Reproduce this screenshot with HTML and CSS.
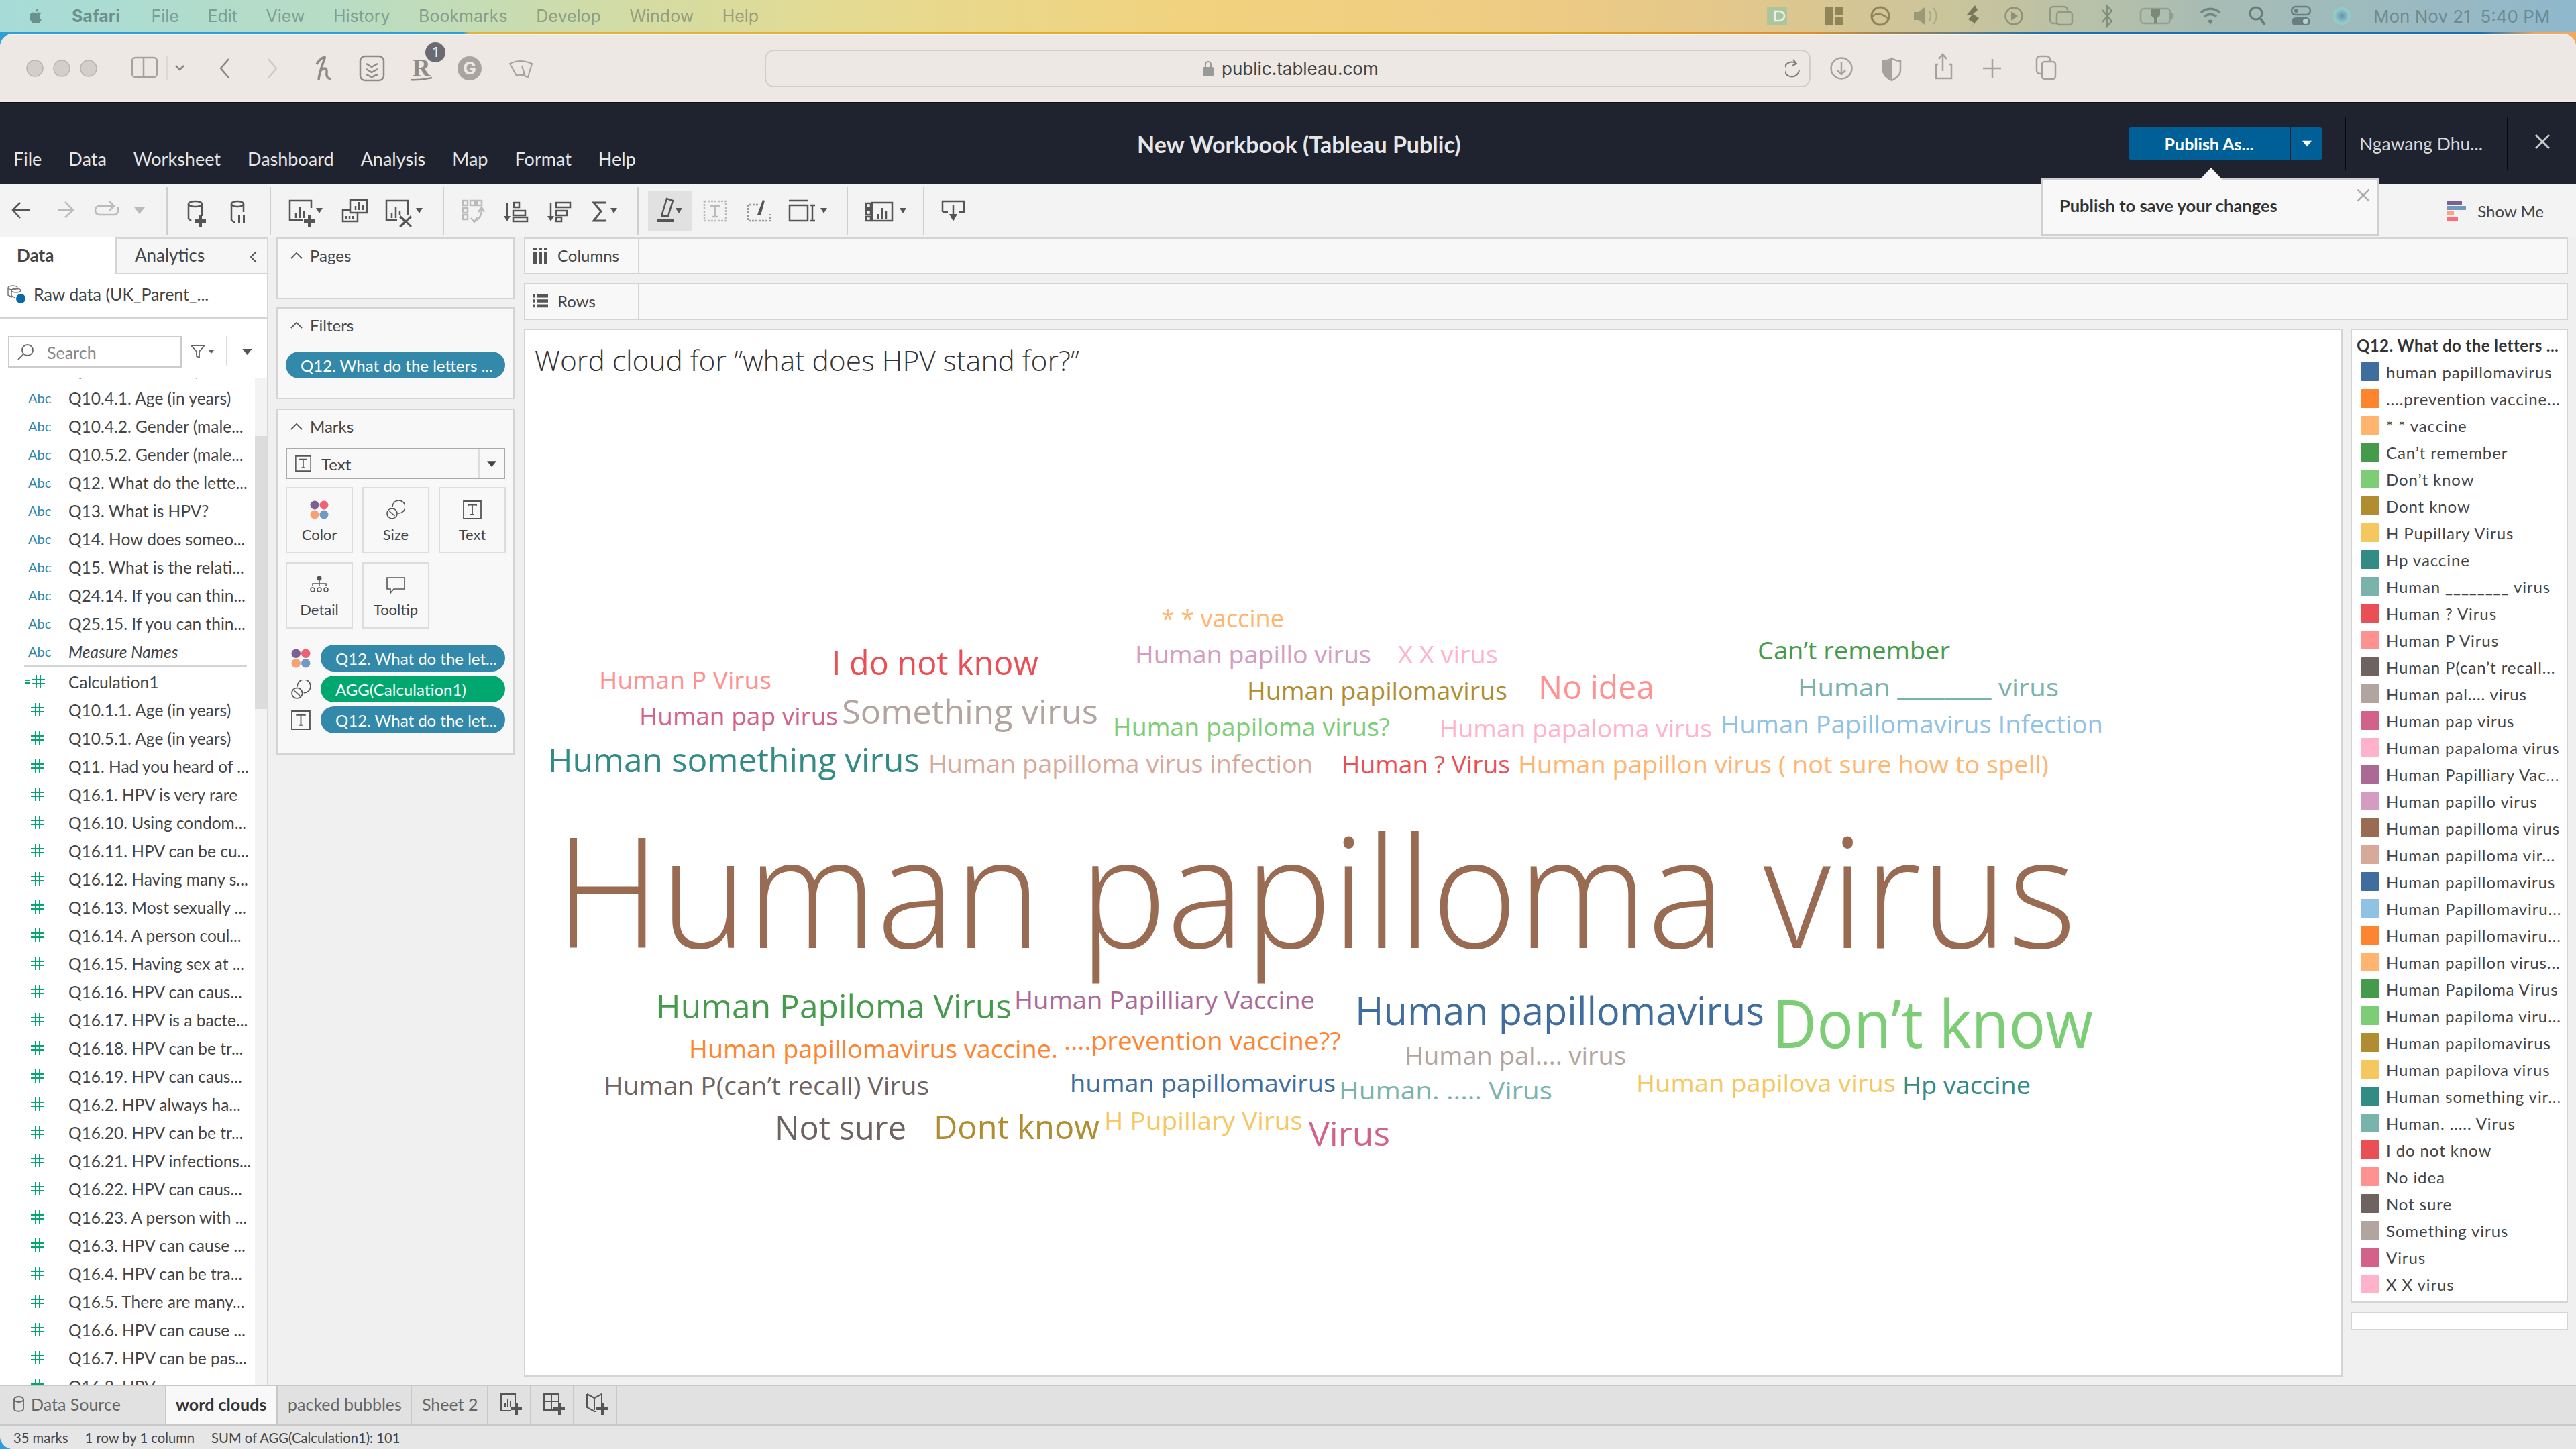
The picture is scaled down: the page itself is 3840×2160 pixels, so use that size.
FILE: index.html
```html
<!DOCTYPE html>
<html lang="en">
<head>
  <meta charset="UTF-8" />
  <title>New Workbook (Tableau Public)</title>
  <link rel="stylesheet" href="styles.css">
</head>
<body>
  <svg class="defs" aria-hidden="true">
    <symbol id="i-hash" viewBox="0 0 20 20"><path d="M7 0v20M13 0v20M0 7h20M0 13h20" fill="none" stroke="currentColor" stroke-width="2"/></symbol>
    <symbol id="i-calc" viewBox="0 0 30 20"><path d="M17 0v20M23 0v20M10 7h20M10 13h20M0 8h7M0 12h7" fill="none" stroke="currentColor" stroke-width="2"/></symbol>
    <symbol id="i-text" viewBox="0 0 28 28"><path d="M1 1h26v26H1zM8 8V6.500h12V8M14 6.500V21M11 21h6" fill="none" stroke="#555" stroke-width="1.800"/></symbol>
    <symbol id="i-color" viewBox="0 0 28 28"><circle cx="7" cy="7" r="6.500" fill="#7b6292"/><circle cx="21" cy="7" r="6.500" fill="#f26173"/><circle cx="7" cy="21" r="6.500" fill="#f7a072"/><circle cx="21" cy="21" r="6.500" fill="#6f9ac2"/></symbol>
    <symbol id="i-size" viewBox="0 0 28 28"><path d="M9 10a9.500 9.500 0 1 1 9 9" fill="none" stroke="#555" stroke-width="1.600"/><circle cx="8.500" cy="19.500" r="7.500" fill="none" stroke="#555" stroke-width="1.600"/><path d="M4.500 16l8 7" stroke="#555" stroke-width="1.600"/></symbol>
    <symbol id="i-detail" viewBox="0 0 28 28"><circle cx="14" cy="4" r="3.500" fill="#555"/><path d="M14 7v8M4 15V12h20v3" fill="none" stroke="#555" stroke-width="1.500"/><circle cx="4" cy="21" r="3" fill="none" stroke="#555" stroke-width="1.500"/><circle cx="14" cy="21" r="3" fill="none" stroke="#555" stroke-width="1.500"/><circle cx="24" cy="21" r="3" fill="none" stroke="#555" stroke-width="1.500"/></symbol>
    <symbol id="i-tooltip" viewBox="0 0 28 28"><path d="M1 3h26v17H11l-5 6v-6H1z" fill="none" stroke="#555" stroke-width="1.600"/></symbol>
    <symbol id="i-caret" viewBox="0 0 16 10"><path d="M0 0h16L8 10z" fill="currentColor"/></symbol>
  </svg>

  <div class="page">
    <!-- mac menu bar -->
    <div class="menubar">
      <svg class="apple" viewBox="0 0 24 24"><path d="M18.710 19.500c-.83 1.240-1.710 2.450-3.050 2.470-1.340.03-1.770-.79-3.290-.79-1.530 0-2 .77-3.270.82-1.310.05-2.300-1.320-3.140-2.530C4.250 17 2.940 12.450 4.700 9.390c.87-1.520 2.430-2.480 4.120-2.510 1.280-.02 2.500.87 3.290.87.78 0 2.260-1.070 3.800-.91.65.03 2.470.26 3.640 1.980-.09.06-2.170 1.280-2.150 3.810.03 3.020 2.650 4.030 2.680 4.040-.03.07-.42 1.440-1.380 2.830M13 3.500c.73-.83 1.940-1.460 2.940-1.500.13 1.170-.34 2.350-1.040 3.190-.69.85-1.830 1.510-2.950 1.420-.15-1.150.41-2.350 1.050-3.110z"/></svg>
      <b>Safari</b><span>File</span><span>Edit</span><span>View</span><span>History</span><span>Bookmarks</span><span>Develop</span><span>Window</span><span>Help</span>
      <svg class="extras" viewBox="2620 0 900 48">
        <rect x="2634" y="11" width="30" height="26" fill="#a9c79a"/><path d="M2646 17h7a6 6 0 0 1 0 14h-7z" fill="none" stroke="#eee" stroke-width="2.500"/>
        <path d="M2720 10h12v28h-12zM2736 10h12v12h-12zM2736 26h12v12h-12z" fill="#8f8558"/>
        <circle cx="2803" cy="24" r="13" fill="none" stroke="#8f8558" stroke-width="3"/><path d="M2790 26c8-10 16-4 26 2" fill="none" stroke="#8f8558" stroke-width="2.500"/>
        <path d="M2853 18h7l9-7v26l-9-7h-7z" fill="#9a9a78"/><path d="M2875 16a12 12 0 0 1 0 16M2882 12a18 18 0 0 1 0 24" fill="none" stroke="#a8a888" stroke-width="2"/>
        <path d="M2944 8l-12 14h8l-6 7 10 6-6 6 12-14-9-6 7-6z" fill="#77775a"/>
        <circle cx="3002" cy="24" r="12.500" fill="none" stroke="#8f9078" stroke-width="2.500"/><path d="M2998 17l10 7-10 7z" fill="#8f9078"/>
        <path d="M3066 35h-5a5 5 0 0 1-5-5V15a5 5 0 0 1 5-5h16a5 5 0 0 1 5 5v4" fill="none" stroke="#8f9a84" stroke-width="2.500"/><rect x="3066" y="18" width="23" height="19" rx="4" fill="none" stroke="#8f9a84" stroke-width="2.500"/>
        <path d="M3134 15l14 17-7 7V9l7 7-14 17" fill="none" stroke="#7f8d7c" stroke-width="2.200"/>
        <rect x="3191" y="13" width="44" height="22" rx="5" fill="none" stroke="#90a08e" stroke-width="2.500"/><path d="M3206 13h14v10l-5 4v8h-4v-8l-5-4z" fill="#7a8a78"/><path d="M3238 20v8" stroke="#90a08e" stroke-width="2"/>
        <path d="M3281 19a20 20 0 0 1 28 0M3286 25a13 13 0 0 1 18 0" fill="none" stroke="#6f8682" stroke-width="3.500"/><path d="M3291 31a6 6 0 0 1 8 0l-4 6z" fill="#6f8682"/>
        <circle cx="3363" cy="20" r="9" fill="none" stroke="#667c7c" stroke-width="3"/><path d="M3369 27l7 10" stroke="#667c7c" stroke-width="3.500"/>
        <rect x="3416" y="10" width="28" height="12" rx="6" fill="none" stroke="#66807f" stroke-width="2.500"/><rect x="3416" y="26" width="28" height="12" rx="6" fill="#66807f"/><circle cx="3423" cy="16" r="3" fill="#66807f"/><circle cx="3437" cy="32" r="4" fill="#b8cfd4"/>
      </svg>
      <span class="siri"></span>
      <span class="clock">Mon Nov 21&nbsp;&nbsp;5:40 PM</span>
    </div>
    <div class="edge"></div>

    <div class="window">
      <!-- safari toolbar -->
      <div class="safari">
        <svg class="safari-left" viewBox="0 52 1140 100">
          <g fill="#d3cec9" stroke="#b9b4af" stroke-width="1.500"><circle cx="52" cy="102" r="12"/><circle cx="92" cy="102" r="12"/><circle cx="132" cy="102" r="12"/></g>
          <g fill="none" stroke="#a5a19c" stroke-width="2.500">
            <rect x="197" y="86" width="37" height="29" rx="5"/><path d="M214 86v29"/>
            <path d="M262 98l6 6 6-6" stroke="#8a8681"/>
            <path d="M341 88l-12 14 12 14" stroke="#8a8681"/><path d="M400 88l12 14-12 14" stroke="#cfcac5"/>
          </g>
          <path d="M249 84v36" stroke="#d8d3ce" stroke-width="1.500"/>
          <path d="M472 96c4-8 14-14 12-9-3 9-8 20-9 32M476 108c6-8 12-8 11 0-1 5 1 9 6 10" fill="none" stroke="#8f8b87" stroke-width="3.500"/>
          <rect x="537" y="84" width="35" height="36" rx="7" fill="none" stroke="#8f8b87" stroke-width="2.500"/><path d="M546 95l8 5 9-5M546 103l8 5 9-5M546 111l8 4 9-4" fill="none" stroke="#8f8b87" stroke-width="2.500"/>
          <text x="628" y="114" class="sf-r">R</text><path d="M612 119c12 1 20-1 32-3" fill="none" stroke="#8f8b87" stroke-width="2.500"/>
          <circle cx="649" cy="78" r="15" fill="#6a6a70"/><text x="649" y="85" class="sf-badge">1</text>
          <circle cx="700" cy="102" r="18" fill="#a8a5a1"/><text x="700" y="111" class="sf-g">G</text>
          <path d="M760 95c9-5 21-5 33 0l-6 20-4-1-5-16 4 15c-8-3-12 0-12 0z" fill="none" stroke="#a5a19c" stroke-width="2"/>
        </svg>
        <div class="urlbar">
          <svg class="lock" viewBox="0 0 16 24"><path d="M4 11V6a4 4 0 0 1 8 0v5" fill="none" stroke="#999" stroke-width="2"/><rect x="0" y="10" width="16" height="14" rx="2" fill="#999"/></svg>
          <span class="urltext">public.tableau.com</span>
          <svg class="reload" viewBox="0 0 24 30"><path d="M17 8a11 11 0 1 0 4 9M12 2l5 6-6 3" fill="none" stroke="#7d7975" stroke-width="2"/></svg>
        </div>
        <svg class="safari-right" viewBox="2700 52 400 100">
          <g fill="none" stroke="#a5a19c" stroke-width="2.500">
            <circle cx="2745" cy="102" r="15.500"/><path d="M2745 93v17M2739 105l6 6 6-6"/>
            <path d="M2820 87c5 3 9 4 13 4v14c0 7-7 12-13 15-6-3-13-8-13-15V91c4 0 8-1 13-4z"/>
            <path d="M2889 96h-3v21h23V96h-3M2896 106V82M2890 88l6-7 6 7"/>
            <path d="M2970 88v28M2956 102h27"/>
            <rect x="3036" y="84" width="20" height="26" rx="5"/><rect x="3044" y="92" width="20" height="26" rx="4" fill="#ede8e3"/>
          </g>
          <path d="M2820 88v31c-6-3-13-8-13-14V92c4 0 8-1 13-4z" fill="#a5a19c"/>
        </svg>
      </div>

      <!-- tableau header -->
      <header class="appbar">
        <nav class="appmenu"><span>File</span><span>Data</span><span>Worksheet</span><span>Dashboard</span><span>Analysis</span><span>Map</span><span>Format</span><span>Help</span></nav>
        <div class="apptitle">New Workbook (Tableau Public)</div>
        <div class="appright">
          <div class="publish"><span class="publish-main">Publish As...</span><span class="publish-drop"><svg class="caret-w"><use href="#i-caret"/></svg></span></div>
          <div class="username">Ngawang Dhu...</div>
          <div class="appclose"><svg viewBox="0 0 24 24"><path d="M2 2l20 20M22 2L2 22" stroke="#c9c9c9" stroke-width="3"/></svg></div>
        </div>
        <div class="popover">
          <span class="popover-tip"></span>
          Publish to save your changes
          <svg class="popover-close" viewBox="0 0 24 24"><path d="M2 2l20 20M22 2L2 22" stroke="#aaa" stroke-width="3"/></svg>
        </div>
      </header>

      <!-- tableau toolbar -->
      <div class="toolbar">
        <svg class="toolicons" viewBox="0 274 1470 80">
          <g stroke="#cfcfcf" stroke-width="2"><path d="M249 279v72M403 279v72M661 279v72M951 279v72M1263 279v72M1377 279v72"/></g>
          <g fill="none" stroke="#bbb" stroke-width="2.500">
            <path d="M108 313H84M97 302l-12 11 12 12" transform="rotate(180 97 313)"/>
            <path d="M168 307h-20a6 6 0 0 0-6 6v1a6 6 0 0 0 6 6h22a6 6 0 0 0 6-6v-6M163 300l7 7-7 7"/>
            <rect x="690" y="299" width="7" height="7"/><rect x="701" y="299" width="7" height="7"/><rect x="711" y="299" width="7" height="7"/><rect x="690" y="310" width="7" height="7"/><rect x="690" y="320" width="7" height="7"/>
            <path d="M718 312c0 8-2 14-10 18M702 325l5 6 4-7M713 316l5-7 4 7"/>
            <rect x="1050" y="300" width="32" height="29" stroke-dasharray="3 2"/><path d="M1059 307h14M1066 307v16M1062 323h8"/>
            <path d="M1130 305h-15v24h33v-10" stroke-dasharray="3 2" stroke="#999"/>
          </g>
          <path d="M200 309h16l-8 10z" fill="#bbb"/>
          <g fill="none" stroke="#555" stroke-width="2.500">
            <path d="M44 313H19M30 302l-11 11 11 12"/>
            <ellipse cx="291" cy="304" rx="10" ry="4"/><path d="M281 304v22l4 3M301 304v18"/>
            <ellipse cx="354" cy="304" rx="9" ry="4"/><path d="M345 304v24l5 4M363 304v12"/>
            <path d="M464 310v-11h-32v29h20"/><path d="M441 318v7M447 308v17M453 314v11"/>
            <rect x="522" y="298" width="25" height="19"/><path d="M530 313v-6M535 313v-12M541 313v-8"/>
            <path d="M522 313h-11v17h22v-13"/><path d="M516 322v5M521 322v5M526 322v5"/>
            <path d="M608 320v-21h-32v29h16"/><path d="M584 318v7M590 308v17M596 314v7"/>
            <path d="M756 302v22"/><rect x="766" y="302" width="8" height="7"/><rect x="765" y="314" width="18" height="7"/><rect x="765" y="324" width="21" height="6"/>
            <path d="M821 302v22"/><rect x="829" y="302" width="21" height="7"/><rect x="829" y="314" width="16" height="7"/><rect x="829" y="324" width="8" height="6"/>
            <path d="M904 302h-19l11 13-11 14h19" stroke-width="3"/>
            <path d="M1177 306h27v23h-27zM1176 299h28M1211 306v23M1207 306h8M1207 329h8"/>
            <rect x="1300" y="302" width="30" height="27"/><path d="M1291 303h7v7h-7zM1291 313h7v7h-7zM1291 323h7v6h-7z"/><path d="M1309 327v-8M1315 327v-17M1321 327v-12"/>
            <path d="M1405 316v-16h32v16h-8M1413 316h-8M1421 306v15"/>
          </g>
          <rect x="966" y="285" width="66" height="60" fill="#e1e1e1"/>
          <g fill="none" stroke="#555" stroke-width="2.500"><path d="M987 319l7-23 9 3-7 23-9 0z"/></g>
          <rect x="980" y="327" width="25" height="4" fill="#555"/>
          <path d="M1137 298l3 1-6 22-5-1z" fill="#555"/>
          <g fill="#555">
            <path d="M751 322h10l-5 8zM816 322h10l-5 8zM1415 319h12l-6 11z"/>
            <path d="M296 321h5v6h6v5h-6v6h-5v-6h-6v-5h6zM459 321h5v6h6v5h-6v6h-5v-6h-6v-5h6z"/>
            <path d="M355 320h3v13h-3zM362 320h3v13h-3z"/>
            <path d="M597 321l8 7 7-7 2 3-7 6 7 7-2 2-7-7-7 7-3-2 7-7-7-6z"/>
            <path d="M471 310h10l-5 8zM620 310h10l-5 8zM910 310h10l-5 8zM1007 310h10l-5 8zM1223 310h10l-5 8zM1341 310h10l-5 8z"/>
          </g>
        </svg>
        <div class="showme">
          <span class="showme-bars"><i class="sm1"></i><i class="sm2"></i><i class="sm3"></i><i class="sm4"></i></span>
          Show Me
        </div>
      </div>

      <!-- workspace -->
      <div class="workspace">
        <aside class="datapane">
          <div class="tabs">
            <div class="tab tab-on">Data</div>
            <div class="tab">Analytics<svg class="tab-chev" viewBox="0 0 12 20"><path d="M10 2L2 10l8 8" fill="none" stroke="#555" stroke-width="2"/></svg></div>
          </div>
          <div class="source">
            <svg class="source-icon" viewBox="0 0 28 28"><g fill="none" stroke="#777" stroke-width="1.500"><ellipse cx="9" cy="5" rx="7" ry="3"/><path d="M2 5v11l6 3M16 5v3"/><ellipse cx="14" cy="9" rx="7" ry="3"/><path d="M7 9v8l6 3"/></g><circle cx="21" cy="21" r="7" fill="#0a6aa8"/></svg>
            Raw data (UK_Parent_...
          </div>
          <div class="searchrow">
            <div class="search">
              <svg class="search-icon" viewBox="0 0 24 24"><circle cx="15" cy="9" r="8" fill="none" stroke="#666" stroke-width="1.800"/><path d="M9 15l-8 8" stroke="#666" stroke-width="1.800"/></svg>
              Search
            </div>
            <svg class="search-filter" viewBox="0 0 36 20"><path d="M1 1h20l-8 9v9l-4-2v-7z" fill="none" stroke="#666" stroke-width="1.800"/><path d="M26 7h10l-5 6z" fill="#666"/></svg>
            <span class="search-sep"></span>
            <svg class="search-menu"><use href="#i-caret"/></svg>
          </div>
          <div class="fields">
            <div class="fields-scroll">
              <div class="field"><span class="ftype abc">Abc</span>Q10.3.2. Gender (male...</div>
              <div class="field"><span class="ftype abc">Abc</span>Q10.4.1. Age (in years)</div>
              <div class="field"><span class="ftype abc">Abc</span>Q10.4.2. Gender (male...</div>
              <div class="field"><span class="ftype abc">Abc</span>Q10.5.2. Gender (male...</div>
              <div class="field"><span class="ftype abc">Abc</span>Q12. What do the lette...</div>
              <div class="field"><span class="ftype abc">Abc</span>Q13. What is HPV?</div>
              <div class="field"><span class="ftype abc">Abc</span>Q14. How does someo...</div>
              <div class="field"><span class="ftype abc">Abc</span>Q15. What is the relati...</div>
              <div class="field"><span class="ftype abc">Abc</span>Q24.14. If you can thin...</div>
              <div class="field"><span class="ftype abc">Abc</span>Q25.15. If you can thin...</div>
              <div class="field field-em"><span class="ftype abc">Abc</span>Measure Names</div>
              <div class="fields-sep"></div>
              <div class="field"><span class="ftype"><svg class="calc"><use href="#i-calc"/></svg></span>Calculation1</div>
              <div class="field"><span class="ftype"><svg class="hash"><use href="#i-hash"/></svg></span>Q10.1.1. Age (in years)</div>
              <div class="field"><span class="ftype"><svg class="hash"><use href="#i-hash"/></svg></span>Q10.5.1. Age (in years)</div>
              <div class="field"><span class="ftype"><svg class="hash"><use href="#i-hash"/></svg></span>Q11. Had you heard of ...</div>
              <div class="field"><span class="ftype"><svg class="hash"><use href="#i-hash"/></svg></span>Q16.1. HPV is very rare</div>
              <div class="field"><span class="ftype"><svg class="hash"><use href="#i-hash"/></svg></span>Q16.10. Using condom...</div>
              <div class="field"><span class="ftype"><svg class="hash"><use href="#i-hash"/></svg></span>Q16.11. HPV can be cu...</div>
              <div class="field"><span class="ftype"><svg class="hash"><use href="#i-hash"/></svg></span>Q16.12. Having many s...</div>
              <div class="field"><span class="ftype"><svg class="hash"><use href="#i-hash"/></svg></span>Q16.13. Most sexually ...</div>
              <div class="field"><span class="ftype"><svg class="hash"><use href="#i-hash"/></svg></span>Q16.14. A person coul...</div>
              <div class="field"><span class="ftype"><svg class="hash"><use href="#i-hash"/></svg></span>Q16.15. Having sex at ...</div>
              <div class="field"><span class="ftype"><svg class="hash"><use href="#i-hash"/></svg></span>Q16.16. HPV can caus...</div>
              <div class="field"><span class="ftype"><svg class="hash"><use href="#i-hash"/></svg></span>Q16.17. HPV is a bacte...</div>
              <div class="field"><span class="ftype"><svg class="hash"><use href="#i-hash"/></svg></span>Q16.18. HPV can be tr...</div>
              <div class="field"><span class="ftype"><svg class="hash"><use href="#i-hash"/></svg></span>Q16.19. HPV can caus...</div>
              <div class="field"><span class="ftype"><svg class="hash"><use href="#i-hash"/></svg></span>Q16.2. HPV always ha...</div>
              <div class="field"><span class="ftype"><svg class="hash"><use href="#i-hash"/></svg></span>Q16.20. HPV can be tr...</div>
              <div class="field"><span class="ftype"><svg class="hash"><use href="#i-hash"/></svg></span>Q16.21. HPV infections...</div>
              <div class="field"><span class="ftype"><svg class="hash"><use href="#i-hash"/></svg></span>Q16.22. HPV can caus...</div>
              <div class="field"><span class="ftype"><svg class="hash"><use href="#i-hash"/></svg></span>Q16.23. A person with ...</div>
              <div class="field"><span class="ftype"><svg class="hash"><use href="#i-hash"/></svg></span>Q16.3. HPV can cause ...</div>
              <div class="field"><span class="ftype"><svg class="hash"><use href="#i-hash"/></svg></span>Q16.4. HPV can be tra...</div>
              <div class="field"><span class="ftype"><svg class="hash"><use href="#i-hash"/></svg></span>Q16.5. There are many...</div>
              <div class="field"><span class="ftype"><svg class="hash"><use href="#i-hash"/></svg></span>Q16.6. HPV can cause ...</div>
              <div class="field"><span class="ftype"><svg class="hash"><use href="#i-hash"/></svg></span>Q16.7. HPV can be pas...</div>
              <div class="field"><span class="ftype"><svg class="hash"><use href="#i-hash"/></svg></span>Q16.8. HPV</div>
            </div>
            <div class="scrollbar"><div class="scrollthumb"></div></div>
          </div>
        </aside>

        <section class="cards">
          <div class="card card-pages"><div class="card-head"><svg class="chev" viewBox="0 0 20 12"><path d="M1 11l9-9 9 9" fill="none" stroke="#555" stroke-width="2"/></svg>Pages</div></div>
          <div class="card card-filters">
            <div class="card-head"><svg class="chev" viewBox="0 0 20 12"><path d="M1 11l9-9 9 9" fill="none" stroke="#555" stroke-width="2"/></svg>Filters</div>
            <div class="pill pill-blue">Q12. What do the letters ...</div>
          </div>
          <div class="card card-marks">
            <div class="card-head"><svg class="chev" viewBox="0 0 20 12"><path d="M1 11l9-9 9 9" fill="none" stroke="#555" stroke-width="2"/></svg>Marks</div>
            <div class="marktype">
              <svg class="marktype-icon"><use href="#i-text"/></svg>
              <span class="marktype-label">Text</span>
              <span class="marktype-drop"><svg class="marktype-caret"><use href="#i-caret"/></svg></span>
            </div>
            <div class="markgrid">
              <div class="markbtn"><svg><use href="#i-color"/></svg>Color</div>
              <div class="markbtn"><svg><use href="#i-size"/></svg>Size</div>
              <div class="markbtn"><svg><use href="#i-text"/></svg>Text</div>
              <div class="markbtn"><svg><use href="#i-detail"/></svg>Detail</div>
              <div class="markbtn"><svg><use href="#i-tooltip"/></svg>Tooltip</div>
            </div>
            <div class="markpills">
              <div class="markpill"><svg><use href="#i-color"/></svg><div class="pill pill-blue">Q12. What do the let...</div></div>
              <div class="markpill"><svg><use href="#i-size"/></svg><div class="pill pill-green">AGG(Calculation1)</div></div>
              <div class="markpill"><svg><use href="#i-text"/></svg><div class="pill pill-blue">Q12. What do the let...</div></div>
            </div>
          </div>
        </section>

        <main class="main">
          <div class="shelf"><div class="shelf-name"><svg class="shelf-icon" viewBox="0 0 22 24"><path d="M0 0h5v3H0zM8 0h5v3H8zM16 0h5v3h-5zM0 6h5v18H0zM8 6h5v18H8zM16 6h5v18h-5z" fill="#555"/></svg>Columns</div></div>
          <div class="shelf"><div class="shelf-name"><svg class="shelf-icon" viewBox="0 0 24 22"><path d="M0 0h3v5H0zM6 0h18v5H6zM0 8h3v5H0zM6 8h18v5H6zM0 16h3v5H0zM6 16h18v5H6z" fill="#555"/></svg>Rows</div></div>
          <div class="sheet">
            <div class="canvas">
              <h1 class="canvas-title">Word cloud for ”what does HPV stand for?”</h1>
              <svg class="cloud" viewBox="781 490 2711 1562">
                <text class="word c-ltorange" x="1731" y="935" font-size="37" textLength="183" lengthAdjust="spacingAndGlyphs">* * vaccine</text>
                <text class="word c-ltpurple" x="1692" y="989" font-size="37" textLength="352" lengthAdjust="spacingAndGlyphs">Human papillo virus</text>
                <text class="word c-ltrose" x="2084" y="989" font-size="37" textLength="149" lengthAdjust="spacingAndGlyphs">X X virus</text>
                <text class="word c-green" x="2620" y="983" font-size="37" textLength="287" lengthAdjust="spacingAndGlyphs">Can’t remember</text>
                <text class="word c-red" x="1240" y="1006" font-size="50" textLength="308" lengthAdjust="spacingAndGlyphs">I do not know</text>
                <text class="word c-pink" x="893" y="1027" font-size="37" textLength="257" lengthAdjust="spacingAndGlyphs">Human P Virus</text>
                <text class="word c-gold" x="1859" y="1043" font-size="37" textLength="388" lengthAdjust="spacingAndGlyphs">Human papilomavirus</text>
                <text class="word c-pink" x="2293" y="1042" font-size="50" textLength="173" lengthAdjust="spacingAndGlyphs">No idea</text>
                <text class="word c-ltteal" x="2680" y="1038" font-size="37" textLength="389" lengthAdjust="spacingAndGlyphs">Human ________ virus</text>
                <text class="word c-rose" x="953" y="1081" font-size="37" textLength="296" lengthAdjust="spacingAndGlyphs">Human pap virus</text>
                <text class="word c-ltgrey" x="1255" y="1079" font-size="50" textLength="382" lengthAdjust="spacingAndGlyphs">Something virus</text>
                <text class="word c-ltgreen" x="1659" y="1097" font-size="37" textLength="413" lengthAdjust="spacingAndGlyphs">Human papiloma virus?</text>
                <text class="word c-ltrose" x="2146" y="1099" font-size="37" textLength="406" lengthAdjust="spacingAndGlyphs">Human papaloma virus</text>
                <text class="word c-ltblue" x="2565" y="1093" font-size="37" textLength="570" lengthAdjust="spacingAndGlyphs">Human Papillomavirus Infection</text>
                <text class="word c-teal" x="817" y="1151" font-size="50" textLength="554" lengthAdjust="spacingAndGlyphs">Human something virus</text>
                <text class="word c-ltbrown" x="1384" y="1152" font-size="37" textLength="573" lengthAdjust="spacingAndGlyphs">Human papilloma virus infection</text>
                <text class="word c-red" x="2000" y="1153" font-size="37" textLength="251" lengthAdjust="spacingAndGlyphs">Human ? Virus</text>
                <text class="word c-ltorange" x="2263" y="1153" font-size="37" textLength="791" lengthAdjust="spacingAndGlyphs">Human papillon virus ( not sure how to spell)</text>
                <text class="word word-big c-brown" x="827" y="1413" font-size="229" textLength="2268" lengthAdjust="spacingAndGlyphs">Human papilloma virus</text>
                <text class="word c-green" x="978" y="1518" font-size="50" textLength="530" lengthAdjust="spacingAndGlyphs">Human Papiloma Virus</text>
                <text class="word c-purple" x="1512" y="1504" font-size="37" textLength="448" lengthAdjust="spacingAndGlyphs">Human Papilliary Vaccine</text>
                <text class="word c-blue" x="2020" y="1528" font-size="58" textLength="610" lengthAdjust="spacingAndGlyphs">Human papillomavirus</text>
                <text class="word c-ltgreen" x="2642" y="1562" font-size="99" textLength="478" lengthAdjust="spacingAndGlyphs">Don’t know</text>
                <text class="word c-orange" x="1027" y="1577" font-size="37" textLength="550" lengthAdjust="spacingAndGlyphs">Human papillomavirus vaccine.</text>
                <text class="word c-orange" x="1586" y="1565" font-size="37" textLength="413" lengthAdjust="spacingAndGlyphs">....prevention vaccine??</text>
                <text class="word c-ltgrey" x="2094" y="1587" font-size="37" textLength="330" lengthAdjust="spacingAndGlyphs">Human pal.... virus</text>
                <text class="word c-grey" x="900" y="1632" font-size="37" textLength="485" lengthAdjust="spacingAndGlyphs">Human P(can’t recall) Virus</text>
                <text class="word c-blue" x="1595" y="1628" font-size="37" textLength="396" lengthAdjust="spacingAndGlyphs">human papillomavirus</text>
                <text class="word c-ltteal" x="1996" y="1639" font-size="37" textLength="318" lengthAdjust="spacingAndGlyphs">Human. ..... Virus</text>
                <text class="word c-yellow" x="2439" y="1628" font-size="37" textLength="387" lengthAdjust="spacingAndGlyphs">Human papilova virus</text>
                <text class="word c-teal" x="2836" y="1631" font-size="37" textLength="191" lengthAdjust="spacingAndGlyphs">Hp vaccine</text>
                <text class="word c-grey" x="1155" y="1699" font-size="50" textLength="196" lengthAdjust="spacingAndGlyphs">Not sure</text>
                <text class="word c-gold" x="1392" y="1698" font-size="50" textLength="247" lengthAdjust="spacingAndGlyphs">Dont know</text>
                <text class="word c-yellow" x="1646" y="1684" font-size="37" textLength="296" lengthAdjust="spacingAndGlyphs">H Pupillary Virus</text>
                <text class="word c-rose" x="1951" y="1708" font-size="49" textLength="121" lengthAdjust="spacingAndGlyphs">Virus</text>
              </svg>
            </div>
            <div class="legendcol">
              <div class="legend">
                <div class="legend-title">Q12. What do the letters ...</div>
                <div class="legend-row c-blue"><span class="swatch"></span>human papillomavirus</div>
                <div class="legend-row c-orange"><span class="swatch"></span>....prevention vaccine...</div>
                <div class="legend-row c-ltorange"><span class="swatch"></span>* * vaccine</div>
                <div class="legend-row c-green"><span class="swatch"></span>Can’t remember</div>
                <div class="legend-row c-ltgreen"><span class="swatch"></span>Don’t know</div>
                <div class="legend-row c-gold"><span class="swatch"></span>Dont know</div>
                <div class="legend-row c-yellow"><span class="swatch"></span>H Pupillary Virus</div>
                <div class="legend-row c-teal"><span class="swatch"></span>Hp vaccine</div>
                <div class="legend-row c-ltteal"><span class="swatch"></span>Human ________ virus</div>
                <div class="legend-row c-red"><span class="swatch"></span>Human ? Virus</div>
                <div class="legend-row c-pink"><span class="swatch"></span>Human P Virus</div>
                <div class="legend-row c-grey"><span class="swatch"></span>Human P(can’t recall...</div>
                <div class="legend-row c-ltgrey"><span class="swatch"></span>Human pal.... virus</div>
                <div class="legend-row c-rose"><span class="swatch"></span>Human pap virus</div>
                <div class="legend-row c-ltrose"><span class="swatch"></span>Human papaloma virus</div>
                <div class="legend-row c-purple"><span class="swatch"></span>Human Papilliary Vac...</div>
                <div class="legend-row c-ltpurple"><span class="swatch"></span>Human papillo virus</div>
                <div class="legend-row c-brown"><span class="swatch"></span>Human papilloma virus</div>
                <div class="legend-row c-ltbrown"><span class="swatch"></span>Human papilloma vir...</div>
                <div class="legend-row c-blue"><span class="swatch"></span>Human papillomavirus</div>
                <div class="legend-row c-ltblue"><span class="swatch"></span>Human Papillomaviru...</div>
                <div class="legend-row c-orange"><span class="swatch"></span>Human papillomaviru...</div>
                <div class="legend-row c-ltorange"><span class="swatch"></span>Human papillon virus...</div>
                <div class="legend-row c-green"><span class="swatch"></span>Human Papiloma Virus</div>
                <div class="legend-row c-ltgreen"><span class="swatch"></span>Human papiloma viru...</div>
                <div class="legend-row c-gold"><span class="swatch"></span>Human papilomavirus</div>
                <div class="legend-row c-yellow"><span class="swatch"></span>Human papilova virus</div>
                <div class="legend-row c-teal"><span class="swatch"></span>Human something vir...</div>
                <div class="legend-row c-ltteal"><span class="swatch"></span>Human. ..... Virus</div>
                <div class="legend-row c-red"><span class="swatch"></span>I do not know</div>
                <div class="legend-row c-pink"><span class="swatch"></span>No idea</div>
                <div class="legend-row c-grey"><span class="swatch"></span>Not sure</div>
                <div class="legend-row c-ltgrey"><span class="swatch"></span>Something virus</div>
                <div class="legend-row c-rose"><span class="swatch"></span>Virus</div>
                <div class="legend-row c-ltrose"><span class="swatch"></span>X X virus</div>
              </div>
              <div class="legend-empty"></div>
            </div>
          </div>
        </main>
      </div>

      <!-- sheet tabs -->
      <div class="sheettabs">
        <div class="stab stab-source"><svg class="stab-db" viewBox="0 0 16 24"><ellipse cx="8" cy="5" rx="7" ry="4" fill="none" stroke="#666" stroke-width="1.800"/><path d="M1 5v14c0 5 14 5 14 0V5" fill="none" stroke="#666" stroke-width="1.800"/></svg>Data Source</div>
        <div class="stab stab-on">word clouds</div>
        <div class="stab stab-packed">packed bubbles</div>
        <div class="stab stab-sheet2">Sheet 2</div>
        <div class="stab stab-new"><svg viewBox="0 0 32 32"><path d="M22 16V1H1v25h14M7 20v-6M11 20V8M15 20v-8" fill="none" stroke="#555" stroke-width="2"/><path d="M22 14h4v7h6v4h-6v7h-4v-7h-7v-4h7z" fill="#555"/></svg></div>
        <div class="stab stab-new"><svg viewBox="0 0 32 32"><path d="M1 1h22v24H1zM12 1v24M1 12h22" fill="none" stroke="#555" stroke-width="2"/><path d="M22 14h4v7h6v4h-6v7h-4v-7h-7v-4h7z" fill="#555"/></svg></div>
        <div class="stab stab-new"><svg viewBox="0 0 32 32"><path d="M1 1l11 6 11-6v14M1 1v20l11 6h2M12 7v18" fill="none" stroke="#555" stroke-width="2"/><path d="M22 14h4v7h6v4h-6v7h-4v-7h-7v-4h7z" fill="#555"/></svg></div>
      </div>

      <!-- status bar -->
      <div class="statusbar">
        <span>35 marks</span><span>1 row by 1 column</span><span>SUM of AGG(Calculation1): 101</span>
      </div>
    </div>
  </div>
</body>
</html>
```

FILE: styles.css
```css
* {
  box-sizing: border-box;
}

html, body {
  margin: 0;
  height: 100%;
}

body {
  font-family: Lato, "Open Sans", sans-serif;
  color: #444;
  overflow: hidden;
}

.defs {
  position: absolute;
  width: 0;
  height: 0;
}

.page {
  width: 3840px;
  height: 2160px;
  display: flex;
  flex-direction: column;
  background: linear-gradient(90deg, #2f9fd8 0, #2f9fd8 690px, #e3b53c 700px, #e0a62e 2300px, #e08f2a 2700px, #1a6fb0 3050px, #1a6fb0 3700px, #f0a860 3780px);
}

/* mac menu bar */
.menubar {
  height: 48px;
  flex: none;
  display: flex;
  align-items: center;
  gap: 42.500px;
  padding: 0 39px 0 40px;
  font-family: Inter, sans-serif;
  font-size: 25px;
  color: rgba(45, 70, 70, 0.42);
  background: linear-gradient(90deg, #a6dcd8 0, #b8dcc4 500px, #d4dca4 950px, #e6da90 1300px, #f2d27e 1800px, #eecb84 2300px, #e2c78c 2600px, #c6c49e 2950px, #a8bcb4 3300px, #8fb8cc 3840px);
}

.menubar b {
  color: rgba(45, 70, 70, 0.5);
  margin-right: 4px;
}

.apple {
  width: 26px;
  height: 34px;
  margin-right: -1.500px;
  fill: rgba(45, 70, 70, 0.5);
}

.extras {
  width: 900px;
  height: 48px;
  margin-left: auto;
  flex: none;
}

.siri {
  width: 26px;
  height: 26px;
  border-radius: 50%;
  flex: none;
  margin-left: -84.500px;
  background: radial-gradient(circle, #6a8fb0, #8fd0c8 60%, #a8b8d8);
}

.clock {
  width: 263px;
  margin-left: -8.500px;
  font-size: 26px;
  text-align: right;
  white-space: nowrap;
}

.edge {
  height: 2px;
  flex: none;
}

.window {
  flex: 1;
  min-height: 0;
  display: flex;
  flex-direction: column;
  border-radius: 20px 20px 0 20px;
  overflow: hidden;
  background: #f0f0f0;
}

/* safari toolbar */
.safari {
  height: 104px;
  flex: none;
  display: flex;
  background: #ede8e3;
  border-top: 2px solid #f8f5f2;
  border-bottom: 2px solid #0e0f14;
}

.safari-left {
  width: 1140px;
  height: 100px;
  flex: none;
}

.safari-right {
  width: 400px;
  height: 100px;
  margin-left: 1px;
  flex: none;
}

.sf-r {
  font: bold 38px "Liberation Serif", serif;
  fill: #8f8b87;
  text-anchor: middle;
}

.sf-badge {
  font: 20px Inter, sans-serif;
  fill: #eee;
  text-anchor: middle;
}

.sf-g {
  font: bold 26px Inter, sans-serif;
  fill: #ede8e3;
  text-anchor: middle;
}

.urlbar {
  width: 1559px;
  height: 56px;
  margin-top: 22px;
  display: flex;
  align-items: center;
  border: 2px solid #d2cdc8;
  border-radius: 14px;
  padding-left: 651px;
  font-family: Inter, sans-serif;
  font-size: 26px;
  color: #444;
  flex: none;
}

.lock {
  width: 16px;
  height: 24px;
  margin-right: 12px;
}

.urltext {
  flex: 1;
}

.reload {
  width: 24px;
  height: 30px;
  margin-right: 12px;
}

/* tableau header */
.appbar {
  position: relative;
  height: 120px;
  flex: none;
  display: grid;
  grid-template-columns: 1695px 480px 1fr;
  background: #1f2330;
  color: #e6e6e6;
}

.appmenu {
  display: flex;
  align-self: end;
  gap: 40px;
  padding: 0 0 22px 20px;
  font-size: 27px;
  line-height: 30px;
}

.apptitle {
  align-self: center;
  font-size: 34px;
  font-weight: 700;
  white-space: nowrap;
  text-align: center;
}

.appright {
  display: flex;
  align-items: center;
  justify-content: flex-end;
}

.publish {
  display: flex;
  width: 289px;
  height: 48px;
  border-radius: 4px;
  overflow: hidden;
  margin-right: 33px;
  color: #fff;
  font-size: 25px;
  font-weight: 700;
}

.publish-main {
  width: 240px;
  display: flex;
  align-items: center;
  justify-content: center;
  background: #005f96;
}

.publish-drop {
  flex: 1;
  margin-left: 2px;
  display: flex;
  align-items: center;
  justify-content: center;
  background: #005f96;
}

.caret-w {
  width: 14px;
  height: 12px;
}

.username {
  width: 244px;
  height: 80px;
  display: flex;
  align-items: center;
  padding-left: 20px;
  border-left: 2px solid #08090c;
  border-right: 2px solid #08090c;
  font-size: 26.500px;
  color: #d8d8d8;
  white-space: nowrap;
}

.appclose {
  width: 101px;
  display: flex;
  justify-content: center;
  margin-bottom: 6px;
}

.appclose svg {
  width: 24px;
  height: 24px;
}

.popover {
  position: absolute;
  z-index: 5;
  top: 112px;
  left: 3043px;
  width: 503px;
  height: 86px;
  padding: 23px 24px;
  background: #f8f8f8;
  border: 3px solid #d0d0d0;
  border-top-width: 2px;
  font-size: 25.500px;
  font-weight: 700;
  color: #333;
  white-space: nowrap;
}

.popover-tip {
  position: absolute;
  left: 233px;
  top: -18px;
  width: 34px;
  height: 18px;
  background: #f8f8f8;
  clip-path: polygon(50% 0, 100% 100%, 0 100%);
}

.popover-close {
  position: absolute;
  top: 13px;
  right: 10px;
  width: 20px;
  height: 20px;
}

/* tableau toolbar */
.toolbar {
  height: 80px;
  flex: none;
  display: flex;
  align-items: center;
  background: #f3f3f3;
}

.toolicons {
  width: 1470px;
  height: 80px;
  flex: none;
}

.showme {
  margin-left: auto;
  margin-right: 48px;
  display: flex;
  align-items: center;
  gap: 17px;
  font-size: 24px;
  color: #444;
}

.showme-bars {
  display: flex;
  flex-direction: column;
  gap: 2px;
}

.showme-bars i {
  display: block;
  height: 6px;
}

.sm1 { width: 23px; background: #7b6292; }
.sm2 { width: 29px; background: #6f9ac2; }
.sm3 { width: 11px; background: #ffa27a; }
.sm4 { width: 17px; background: #ff6b7e; }

/* workspace */
.workspace {
  flex: 1;
  min-height: 0;
  display: flex;
  background: #f0f0f0;
}

.datapane {
  width: 400px;
  flex: none;
  display: flex;
  flex-direction: column;
  background: #fff;
  border-right: 2px solid #d8d8d8;
}

.tabs {
  display: flex;
  height: 55px;
  flex: none;
}

.tab {
  position: relative;
  flex: 1;
  display: flex;
  align-items: center;
  padding: 0 0 3px 27px;
  font-size: 26px;
  color: #444;
  background: #f6f6f6;
  border-left: 2px solid #d4d4d4;
  border-top: 2px solid #d4d4d4;
  border-bottom: 2px solid #d4d4d4;
}

.tab-on {
  flex: none;
  width: 172px;
  padding-left: 25px;
  font-weight: 700;
  background: #fff;
  border: 0;
}

.tab-chev {
  position: absolute;
  right: 14px;
  top: 17px;
  width: 12px;
  height: 20px;
}

.source {
  height: 66px;
  flex: none;
  display: flex;
  align-items: center;
  gap: 12px;
  padding: 0 0 6px 10px;
  font-size: 25px;
  border-bottom: 2px solid #d4d4d4;
}

.source-icon {
  width: 28px;
  height: 28px;
}

.searchrow {
  height: 88px;
  flex: none;
  display: flex;
  align-items: flex-start;
  padding: 26px 0 0 12px;
}

.search {
  width: 259px;
  height: 47px;
  display: flex;
  align-items: center;
  gap: 20px;
  padding-left: 12px;
  border: 2px solid #ccc;
  font-size: 25px;
  color: #888;
}

.search-icon {
  width: 24px;
  height: 24px;
}

.search-filter {
  width: 36px;
  height: 20px;
  margin: 13px 0 0 13px;
}

.search-sep {
  width: 2px;
  height: 44px;
  margin-left: 17px;
  background: #ddd;
}

.search-menu {
  width: 15px;
  height: 9px;
  margin: 19px 0 0 22px;
  color: #555;
}

.fields {
  flex: 1;
  min-height: 0;
  display: flex;
  overflow: hidden;
}

.fields-scroll {
  width: 380px;
  margin-top: -33px;
}

.field {
  height: 42px;
  display: flex;
  align-items: center;
  font-size: 24.500px;
  white-space: nowrap;
  color: #444;
}

.field-em {
  font-style: italic;
}

.ftype {
  width: 102px;
  flex: none;
  padding-left: 42px;
  display: flex;
  align-items: center;
  color: #00a870;
}

.abc {
  font-size: 20px;
  font-style: normal;
  color: #2e86a8;
}

.hash {
  width: 20px;
  height: 20px;
  margin-left: 4px;
}

.calc {
  width: 30px;
  height: 20px;
  margin-left: -5px;
}

.fields-sep {
  height: 2px;
  margin: 0 12px 1px 36px;
  background: #d4d4d4;
}

.scrollbar {
  width: 18px;
  flex: none;
  background: #f3f3f3;
  padding-top: 87px;
}

.scrollthumb {
  height: 407px;
  background: #dcdcdc;
}

/* pages, filters, marks */
.cards {
  width: 381px;
  flex: none;
  padding: 0 12px 0 12px;
  display: flex;
  flex-direction: column;
}

.card {
  width: 355px;
  background: #f8f8f8;
  border: 2px solid #d4d4d4;
  padding: 0 12px;
}

.card-pages { height: 92px; }
.card-filters { height: 137px; margin-top: 12px; }
.card-marks { height: 516px; margin-top: 14px; }

.card-head {
  height: 52px;
  display: flex;
  align-items: center;
  gap: 11px;
  padding: 0 0 3px 7px;
  font-size: 24px;
  color: #444;
}

.chev {
  width: 18px;
  height: 11px;
}

.pill {
  height: 40px;
  border-radius: 20px;
  display: flex;
  align-items: center;
  padding-left: 22px;
  font-size: 24px;
  color: #fff;
  white-space: nowrap;
}

.pill-blue { background: #3289a9; }
.pill-green { background: #00a870; }

.card-filters .pill {
  margin-top: 12px;
}

.marktype {
  margin-top: 5px;
  height: 46px;
  display: flex;
  align-items: center;
  border: 2px solid #aaa;
  font-size: 24px;
}

.marktype-icon {
  width: 24px;
  height: 24px;
  margin-left: 12px;
}

.marktype-label {
  flex: 1;
  margin-left: 15px;
}

.marktype-drop {
  width: 38px;
  height: 100%;
  border-left: 2px solid #ddd;
  display: flex;
  align-items: center;
  justify-content: center;
}

.marktype-caret {
  width: 14px;
  height: 9px;
  color: #444;
}

.markgrid {
  margin-top: 12px;
  display: grid;
  grid-template-columns: repeat(3, 100px);
  grid-auto-rows: 99px;
  gap: 13px 14px;
}

.markbtn {
  display: flex;
  flex-direction: column;
  align-items: center;
  border: 2px solid #ddd;
  padding-top: 18px;
  gap: 9px;
  font-size: 22px;
}

.markbtn svg {
  width: 28px;
  height: 28px;
}

.markpills {
  margin-top: 24px;
  display: flex;
  flex-direction: column;
  gap: 6px;
}

.markpill {
  display: flex;
  align-items: center;
  gap: 15px;
  padding-left: 8px;
}

.markpill svg {
  width: 29px;
  height: 29px;
  flex: none;
}

.markpill .pill {
  flex: 1;
}

/* shelves and sheet */
.main {
  flex: 1;
  min-width: 0;
  display: flex;
  flex-direction: column;
}

.shelf {
  width: 3047px;
  height: 55px;
  flex: none;
  margin-bottom: 13px;
  background: #f8f8f8;
  border: 2px solid #d4d4d4;
  display: flex;
}

.shelf-name {
  width: 170px;
  display: flex;
  align-items: center;
  gap: 14px;
  padding: 0 0 2px 12px;
  border-right: 2px solid #d4d4d4;
  font-size: 24px;
}

.shelf-icon {
  width: 22px;
  height: 24px;
}

.sheet {
  display: flex;
  gap: 12px;
  height: 1562px;
  margin-bottom: 12px;
}

.canvas {
  position: relative;
  width: 2711px;
  flex: none;
  background: #fff;
  border: 2px solid #d4d4d4;
}

.canvas-title {
  margin: 0;
  padding: 22px 0 0 14px;
  font-family: "Open Sans", sans-serif;
  font-size: 42.500px;
  font-weight: 300;
  line-height: 46px;
  color: #333;
}

.cloud {
  position: absolute;
  left: -2px;
  top: -2px;
  width: 2711px;
  height: 1562px;
}

.word {
  font-family: "Open Sans", sans-serif;
  font-weight: 400;
  fill: var(--c);
}

.word-big {
  font-weight: 300;
}

.c-blue { --c: #3e6d9e; }
.c-ltblue { --c: #8fc2e3; }
.c-orange { --c: #ff8430; }
.c-ltorange { --c: #ffb570; }
.c-green { --c: #459a4c; }
.c-ltgreen { --c: #7ccd75; }
.c-gold { --c: #b08d30; }
.c-yellow { --c: #f5c85f; }
.c-teal { --c: #338b86; }
.c-ltteal { --c: #79b3ac; }
.c-red { --c: #e94f54; }
.c-pink { --c: #ff9291; }
.c-grey { --c: #6f6361; }
.c-ltgrey { --c: #b2a5a0; }
.c-rose { --c: #d3628b; }
.c-ltrose { --c: #ffb3cb; }
.c-purple { --c: #ab6a95; }
.c-ltpurple { --c: #d39cc0; }
.c-brown { --c: #9a6b53; }
.c-ltbrown { --c: #d6a99b; }

.legendcol {
  width: 324px;
  flex: none;
  display: flex;
  flex-direction: column;
}

.legend {
  height: 1452px;
  background: #fff;
  border: 2px solid #d4d4d4;
  padding: 9px 0 0 7px;
}

.legend-title {
  height: 33px;
  font-size: 24px;
  font-weight: 700;
  letter-spacing: 0.400px;
  color: #333;
  white-space: nowrap;
  line-height: 28px;
}

.legend-row {
  height: 40px;
  display: flex;
  align-items: center;
  gap: 10px;
  padding-left: 6px;
  font-size: 24px;
  letter-spacing: 0.900px;
  color: #444;
  white-space: nowrap;
}

.swatch {
  width: 28px;
  height: 28px;
  flex: none;
  border-radius: 2px;
  background: var(--c);
}

.legend-empty {
  height: 27px;
  margin-top: 14px;
  background: #fff;
  border: 2px solid #d4d4d4;
}

/* sheet tabs and status */
.sheettabs {
  height: 61px;
  flex: none;
  display: flex;
  background: #e1e1e1;
  border-top: 2px solid #c8c8c8;
  border-bottom: 2px solid #c8c8c8;
}

.stab {
  display: flex;
  align-items: center;
  padding-bottom: 4px;
  font-size: 25px;
  color: #666;
  border-right: 2px solid #c8c8c8;
  white-space: nowrap;
}

.stab-source { width: 248px; padding-left: 20px; gap: 10px; }
.stab-on { width: 166px; padding-left: 14px; font-weight: 700; color: #333; background: #f8f8f8; }
.stab-packed { width: 200px; padding-left: 15px; }
.stab-sheet2 { width: 114px; padding-left: 15px; }
.stab-new { width: 64px; padding-left: 18px; }

.stab-db {
  width: 16px;
  height: 24px;
}

.stab-new svg {
  width: 32px;
  height: 32px;
}

.statusbar {
  height: 35px;
  flex: none;
  display: flex;
  align-items: center;
  gap: 25px;
  padding-left: 20px;
  font-size: 20.200px;
  background: #e6e6e6;
  color: #444;
}
```
